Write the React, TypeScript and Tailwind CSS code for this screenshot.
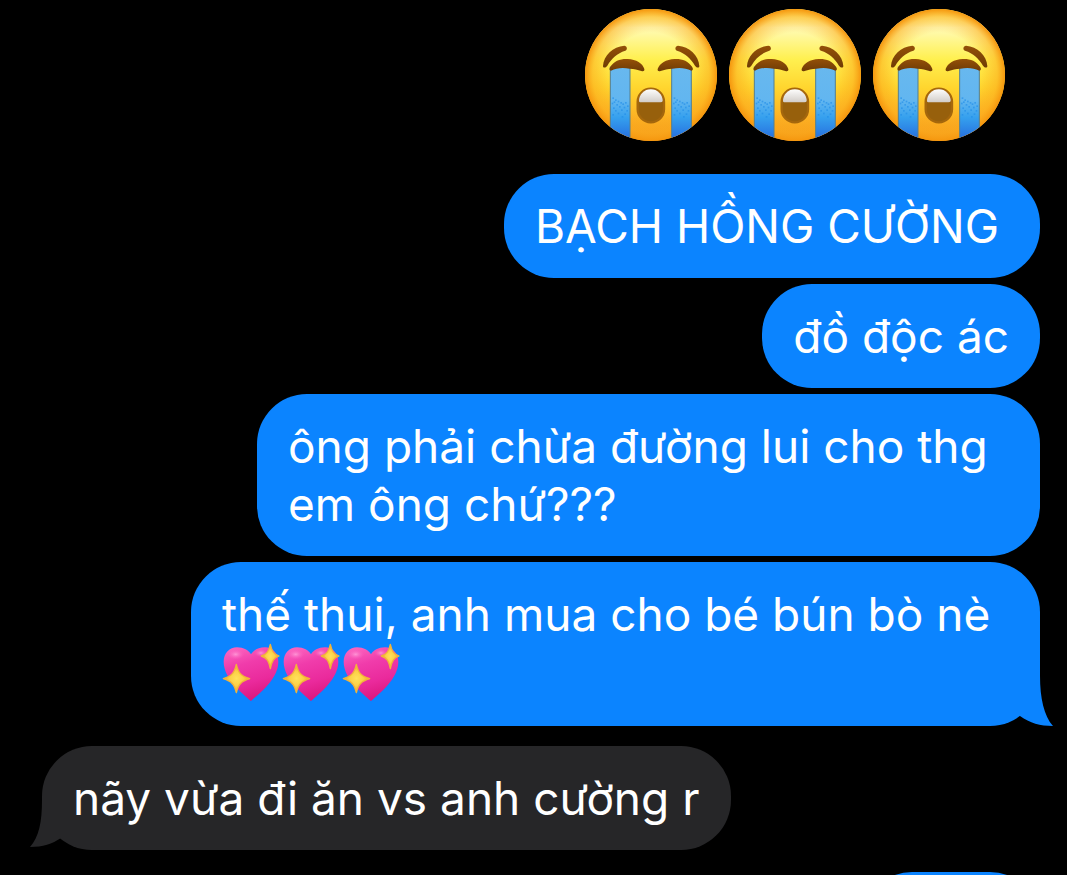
import type { ReactNode } from "react";
import { clsx } from "clsx";

interface BubbleProps {
  children?: ReactNode;
  from?: "me" | "them";
  tail?: boolean;
  className?: string;
}

const specks = [
  [6, 92], [14, 98], [10, 104], [22, 102], [30, 106], [4, 108], [18, 112],
  [36, 110], [44, 106], [26, 118], [8, 122], [40, 120], [50, 116], [14, 130],
  [32, 128], [48, 130], [22, 138], [42, 140], [6, 142], [34, 148],
];

// Gradients shared by every emoji on the page
function EmojiDefs() {
  return (
    <svg className="absolute h-0 w-0" aria-hidden="true">
      <defs>
        <linearGradient id="face" x1="0" y1="0" x2="0" y2="1">
          <stop offset="0" stopColor="#fff06a" />
          <stop offset="0.14" stopColor="#fffbb8" />
          <stop offset="0.38" stopColor="#fff050" />
          <stop offset="0.6" stopColor="#ffd52e" />
          <stop offset="0.82" stopColor="#fdb224" />
          <stop offset="1" stopColor="#f39a1c" />
        </linearGradient>
        <radialGradient id="rim" cx="0.5" cy="0.5" r="0.5">
          <stop offset="0.64" stopColor="#f9a51a" stopOpacity="0" />
          <stop offset="0.88" stopColor="#fba81a" stopOpacity="0.5" />
          <stop offset="1" stopColor="#f5960e" />
        </radialGradient>
        <linearGradient id="tear" x1="0" y1="0" x2="0" y2="1">
          <stop offset="0" stopColor="#68b8ee" />
          <stop offset="0.45" stopColor="#62b6f0" />
          <stop offset="0.68" stopColor="#35a0ee" />
          <stop offset="1" stopColor="#2468dc" />
        </linearGradient>
        <linearGradient id="brow" x1="0" y1="0" x2="0" y2="1">
          <stop offset="0" stopColor="#945008" />
          <stop offset="1" stopColor="#6e3b05" />
        </linearGradient>
        <linearGradient id="teeth" x1="0" y1="0" x2="0" y2="1">
          <stop offset="0" stopColor="#ffffff" />
          <stop offset="1" stopColor="#d2cdc8" />
        </linearGradient>
        <clipPath id="faceClip">
          <circle cx="228" cy="225" r="198" />
        </clipPath>
        <clipPath id="mouthClip">
          <rect x="192" y="268" width="71" height="96" rx="35" />
        </clipPath>
        <linearGradient id="heart" x1="0.3" y1="0" x2="0.6" y2="1">
          <stop offset="0" stopColor="#fb62bd" />
          <stop offset="0.3" stopColor="#f03cab" />
          <stop offset="0.65" stopColor="#ea2a9c" />
          <stop offset="1" stopColor="#d9147a" />
        </linearGradient>
        <radialGradient id="heartShine">
          <stop offset="0" stopColor="#ff9cd8" stopOpacity="0.9" />
          <stop offset="1" stopColor="#fb5cc0" stopOpacity="0" />
        </radialGradient>
        <radialGradient id="sparkle">
          <stop offset="0" stopColor="#ffe25a" />
          <stop offset="0.5" stopColor="#fcd046" />
          <stop offset="1" stopColor="#eba42c" />
        </radialGradient>
      </defs>
    </svg>
  );
}

function Tear({ x }: { x: number }) {
  return (
    <g clipPath="url(#faceClip)">
      <rect x={x} y="200" width="59" height="225" fill="url(#tear)" />
      {specks.map(([dx, dy]) => (
        <rect key={`${dx}-${dy}`} x={x + dx} y={200 + dy} width="5" height="5" fill="#208ce8" opacity="0.6" />
      ))}
      <path d={`M${x} 200V425M${x + 59} 200V425`} stroke="#557f91" strokeWidth="3" />
    </g>
  );
}

function SobbingFace() {
  return (
    <svg viewBox="30 27 396 396" className="size-[132px]" role="img" aria-label="sobbing face">
      <circle cx="228" cy="225" r="198" fill="url(#face)" />
      <circle cx="228" cy="225" r="198" fill="url(#rim)" />
      <Tear x={106} />
      <Tear x={290} />
      <g fill="url(#brow)">
        <path d="M84 198C86 166 114 140 148 137C156 137 159 149 151 152C126 160 110 175 97 197C92 204 84 205 84 198Z" />
        <path d="M373 198C371 166 343 140 309 137C301 137 298 149 306 152C331 160 347 175 360 197C365 204 373 205 373 198Z" />
        <path d="M105 202C117 182 137 176 158 177C184 178 203 190 208 207C209 213 205 215 199 213C188 209 178 206 164 206C142 202 124 204 108 212C103 212 102 207 105 202Z" />
        <path d="M352 202C340 182 320 176 299 177C273 178 254 190 248 207C247 213 251 215 257 213C268 209 278 206 292 206C315 202 332 204 349 212C354 212 355 207 352 202Z" />
      </g>
      <rect x="188" y="266" width="79" height="101" rx="39" fill="#97600c" stroke="#a5670c" strokeWidth="7" />
      <path d="M190 266H265V298Q265 307 256 307H199Q190 307 190 298Z" fill="url(#teeth)" clipPath="url(#mouthClip)" />
    </svg>
  );
}

function SparklingHeart() {
  return (
    <svg viewBox="21 12 180 180" className="size-[60px]" role="img" aria-label="sparkling heart">
      <path
        d="M108 186C84 164 26 120 26 68C26 42 44 25 66 25C86 25 101 34 108 46C115 34 130 25 150 25C172 25 190 42 190 68C190 120 132 164 108 186Z"
        fill="url(#heart)"
      />
      <ellipse cx="62" cy="46" rx="26" ry="16" fill="url(#heartShine)" />
      <ellipse cx="138" cy="42" rx="20" ry="12" fill="url(#heartShine)" />
      <path d="M64 76C70 103 79 111 104 119C79 127 70 135 64 161C58 135 49 127 25 119C49 111 58 103 64 76Z" fill="url(#sparkle)" stroke="#f2b33a" strokeWidth="4" strokeLinejoin="round" />
      <path d="M166 16C171 38 176 45 192 51C176 57 171 65 166 89C161 65 156 57 139 51C156 45 161 38 166 16Z" fill="url(#sparkle)" stroke="#f2b33a" strokeWidth="4" strokeLinejoin="round" />
    </svg>
  );
}

function Bubble({ children, from = "me", tail = false, className }: BubbleProps) {
  const mine = from === "me";

  return (
    <div
      className={clsx(
        "relative shrink-0 rounded-[50px] px-[31px] py-[23px]",
        mine ? "self-end bg-[#0b84ff]" : "self-start bg-[#262628]",
        className
      )}
    >
      {children}
      {tail && mine && (
        <svg viewBox="0 0 34 50" className="absolute -right-[13px] bottom-0 h-[50px] w-[34px]" aria-hidden="true">
          <path d="M1 0H21C21 22 25 40 34 50C21 50 11 47 1 40Z" fill="#0b84ff" />
        </svg>
      )}
      {tail && !mine && (
        <svg viewBox="0 0 32 50" className="absolute bottom-0 -left-[12px] h-[50px] w-[32px]" aria-hidden="true">
          <path d="M31 0H12C12 22 9 37 0 47C13 47 22 44 31 38Z" fill="#262628" />
        </svg>
      )}
    </div>
  );
}

export default function App() {
  return (
    <main className="flex h-screen flex-col overflow-hidden bg-black pt-[9px] pr-[27px] pl-[42px] font-['Inter',sans-serif] text-[46px] leading-[58px] text-white">
      <EmojiDefs />

      {/* Large emoji message, no bubble */}
      <div className="flex shrink-0 gap-3 self-end pr-[35px]">
        <SobbingFace />
        <SobbingFace />
        <SobbingFace />
      </div>

      {/* Sent */}
      <div className="mt-[33px] flex shrink-0 flex-col gap-1.5">
        <Bubble className="min-w-[536px]">BẠCH HỒNG CƯỜNG</Bubble>
        <Bubble>đồ độc ác</Bubble>
        <Bubble className="min-w-[783px]">
          ông phải chừa đường lui cho thg
          <br />
          em ông chứ???
        </Bubble>
        <Bubble tail className="min-w-[849px]">
          thế thui, anh mua cho bé bún bò nè
          <div className="flex">
            <SparklingHeart />
            <SparklingHeart />
            <SparklingHeart />
          </div>
        </Bubble>
      </div>

      {/* Received */}
      <div className="mt-5 flex shrink-0 flex-col">
        <Bubble from="them" tail>
          nãy vừa đi ăn vs anh cường r
        </Bubble>
      </div>

      {/* Next sent message, scrolled past the bottom edge */}
      <div className="mt-[22px] flex shrink-0 flex-col">
        <Bubble className="h-[104px] w-[178px]" />
      </div>
    </main>
  );
}
